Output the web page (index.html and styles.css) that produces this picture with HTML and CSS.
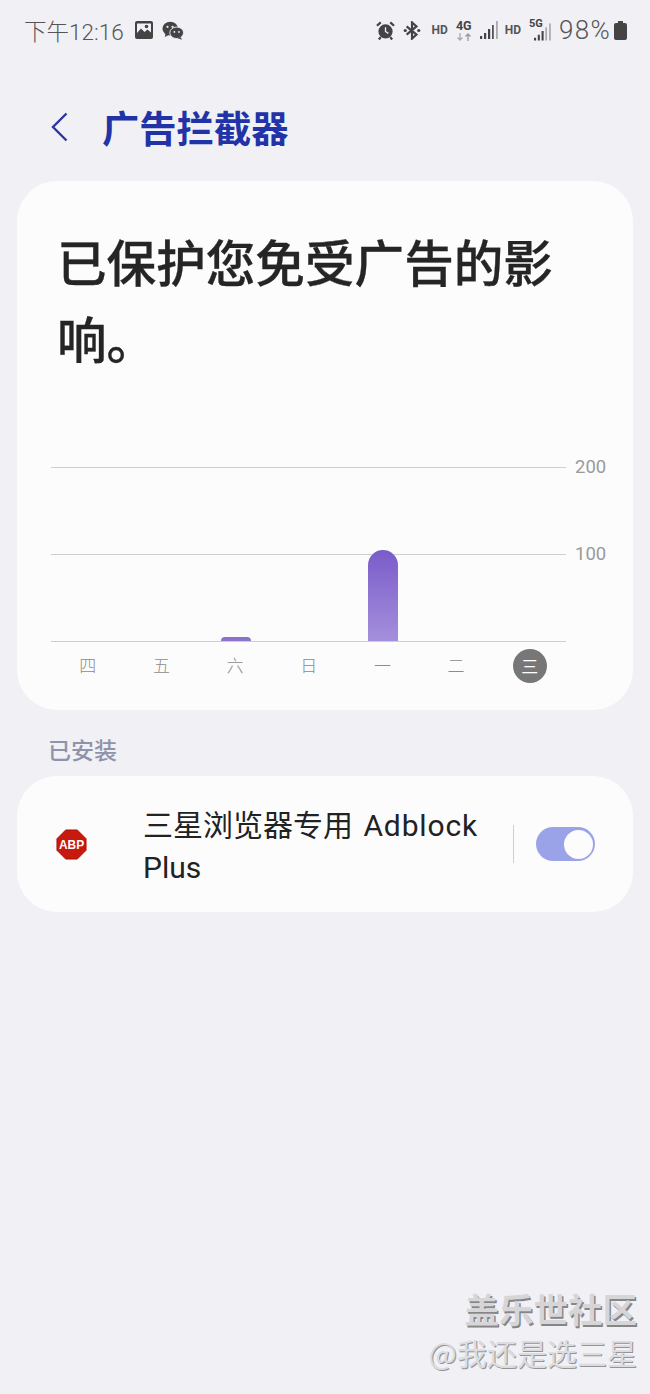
FILE: index.html
```html
<!DOCTYPE html>
<html lang="zh-CN">
<head>
<meta charset="utf-8">
<title>广告拦截器</title>
<link rel="stylesheet" href="styles.css">
</head>
<body>
<div class="screen">
  <div class="status">
    <div class="status-left">
      <span class="time">下午12:16</span>
      <svg class="ic-pic" viewBox="0 0 20 20"><path fill="#444" fill-rule="evenodd" d="M3 1h14a2 2 0 0 1 2 2v14a2 2 0 0 1-2 2H3a2 2 0 0 1-2-2V3a2 2 0 0 1 2-2zm0 2.500V13l4-4.500 3.500 3.500 3-2.500 3.500 3V3.500z"/><circle cx="12.500" cy="6.500" r="1.800" fill="#444"/></svg>
      <svg class="ic-wechat" viewBox="0 0 24 20"><ellipse cx="9" cy="8" rx="8.500" ry="7.500" fill="#444"/><path d="M4 13l-1 4 5-2.500z" fill="#444"/><ellipse cx="16" cy="12.500" rx="7.500" ry="6.300" fill="#444" stroke="#f0f0f5" stroke-width="1"/><path d="M20 17l2 3-5-1.500z" fill="#444"/><circle cx="6" cy="6" r="1.200" fill="#f0f0f5"/><circle cx="11.500" cy="6" r="1.200" fill="#f0f0f5"/><circle cx="13.500" cy="11.500" r="1" fill="#f0f0f5"/><circle cx="18.500" cy="11.500" r="1" fill="#f0f0f5"/></svg>
    </div>
    <div class="status-right">
      <svg class="ic-alarm" viewBox="0 0 20 20"><circle cx="10" cy="11" r="7.500" fill="#444"/><path d="M10 6.500V11l3 2" stroke="#f0f0f5" stroke-width="1.400" fill="none"/><path d="M1 5l4-3.500M19 5l-4-3.500M5 17l-2 2.500M15 17l2 2.500" stroke="#444" stroke-width="2.400"/></svg>
      <svg class="ic-bt" viewBox="0 0 20 20"><path d="M4 5.500l11 9-5 4.500V1l5 4.500-11 9" fill="none" stroke="#444" stroke-width="2.400"/><circle cx="2.500" cy="10" r="1.800" fill="#444"/><circle cx="17.500" cy="10" r="1.800" fill="#444"/></svg>
      <span class="hd hd-first">HD</span>
      <span class="net">
        <span class="net-label">4G</span>
        <svg class="ic-arrows" viewBox="0 0 16 8"><path d="M4 0v7M1.500 4.500L4 7l2.500-2.500" stroke="#aaa" stroke-width="1.300" fill="none"/><path d="M12 8V1M9.500 3.500L12 1l2.500 2.500" stroke="#999" stroke-width="1.300" fill="none"/></svg>
      </span>
      <svg class="ic-signal" viewBox="0 0 18 18"><path fill="#444" d="M0 15h2.200v3H0zM4 12h2.200v6H4zM8 8h2.200v10H8z"/><path fill="#555" d="M12 4h1.800v14H12z"/><path fill="#aaa" d="M16 0h1.800v18H16z"/></svg>
      <span class="hd hd-second">HD</span>
      <span class="net net-5g">
        <span class="net-label small">5G</span>
        <svg class="ic-signal5" viewBox="0 0 18 18"><path fill="#444" d="M0 15h2.200v3H0zM4 12h2.200v6H4zM8 8h2.200v10H8z"/><path fill="#aaa" d="M12 4h1.800v14H12zM16 0h1.800v18H16z"/></svg>
      </span>
      <span class="battery-text">98%</span>
      <svg class="ic-batt" viewBox="0 0 13 19"><path fill="#444" d="M4 0h5v2h2a2 2 0 0 1 2 2v13a2 2 0 0 1-2 2H2a2 2 0 0 1-2-2V4a2 2 0 0 1 2-2h2z"/></svg>
    </div>
  </div>

  <header class="appbar">
    <svg class="back" viewBox="0 0 17 30"><path d="M15.500 1.500L2 15l13.500 13.500" fill="none" stroke="#2a389f" stroke-width="2.400"/></svg>
    <h1 class="page-title">广告拦截器</h1>
  </header>

  <section class="card hero">
    <h2 class="headline">已保护您免受广告的影响。</h2>
    <div class="chart">
      <div class="plot">
        <div class="row"><span class="line"></span><span class="tick">200</span></div>
        <div class="row"><span class="line"></span><span class="tick">100</span></div>
        <div class="row"><span class="line"></span></div>
        <div class="bars">
          <div class="slot"></div>
          <div class="slot"></div>
          <div class="slot"><span class="bar bar-small"></span></div>
          <div class="slot"></div>
          <div class="slot"><span class="bar bar-big"></span></div>
          <div class="slot"></div>
          <div class="slot"></div>
        </div>
      </div>
      <div class="days">
        <span class="day">四</span>
        <span class="day">五</span>
        <span class="day">六</span>
        <span class="day">日</span>
        <span class="day">一</span>
        <span class="day">二</span>
        <span class="day today"><span class="today-mark">三</span></span>
      </div>
    </div>
  </section>

  <div class="section-label">已安装</div>

  <section class="card item">
    <svg class="abp" viewBox="0 0 32 32"><path fill="#c8190f" stroke="#a81208" stroke-width="1" d="M10 1h12l9 9v12l-9 9H10l-9-9V10z"/><text x="16" y="21" class="abp-text" text-anchor="middle" textLength="26" lengthAdjust="spacingAndGlyphs">ABP</text></svg>
    <div class="item-name">三星浏览器专用 <span class="latin">Adblock</span> Plus</div>
    <span class="divider"></span>
    <span class="switch"><span class="knob"></span></span>
  </section>

  <footer class="watermark">
    <div class="wm-main">盖乐世社区</div>
    <div class="wm-sub">@我还是选三星</div>
  </footer>
</div>
</body>
</html>
```

FILE: styles.css
```css
* { box-sizing: border-box; }
html, body { margin: 0; padding: 0; }
body {
  width: 650px;
  height: 1394px;
  overflow: hidden;
  background: #f0f0f5;
  font-family: Roboto, "Noto Sans CJK SC", sans-serif;
}
.screen {
  height: 1394px;
  display: flex;
  flex-direction: column;
  padding: 0 17px;
}
.status {
  height: 60px;
  margin: 0 -17px;
  padding: 0 23px 0 24px;
  display: flex;
  justify-content: space-between;
  align-items: center;
  color: #555;
}
.status-left, .status-right { display: flex; align-items: center; }
.time { font-size: 22.500px; font-weight: 300; color: #555; line-height: 28px; margin-top: 4px; }
.ic-pic { width: 20px; height: 20px; margin-left: 10px; }
.ic-wechat { width: 22px; height: 19px; margin-left: 8px; }
.ic-alarm { width: 19px; height: 19px; margin-right: 8px; }
.ic-bt { width: 18px; height: 19px; margin-right: 10px; }
.hd { font-size: 12px; font-weight: 700; color: #555; line-height: 20px; }
.hd-first { margin-right: 8px; }
.hd-second { margin-right: 8px; }
.net { display: flex; flex-direction: column; align-items: center; width: 16px; margin-right: 8px; }
.net-label { font-size: 12.500px; font-weight: 700; color: #444; line-height: 12px; }
.ic-arrows { width: 16px; height: 8px; margin-top: 1px; }
.ic-signal { width: 18px; height: 18px; margin-right: 7px; }
.net-5g { position: relative; width: 22px; height: 22px; margin-right: 8px; }
.net-label.small { position: absolute; left: 0; top: -1px; font-size: 11px; }
.ic-signal5 { position: absolute; left: 5px; top: 4px; width: 17px; height: 18px; }
.battery-text { font-size: 26px; letter-spacing: 1.300px; font-weight: 300; color: #555; line-height: 28px; margin-right: 3px; }
.ic-batt { width: 13px; height: 19px; }

.appbar {
  height: 121px;
  margin: 0 -17px;
  padding: 13px 0 0 51px;
  display: flex;
  align-items: center;
}
.back { width: 17px; height: 30px; flex: none; }
.page-title {
  margin: 0 0 0 34px;
  font-size: 37.300px;
  font-weight: 700;
  line-height: 48px;
  color: #2233a8;
  font-family: "Noto Sans CJK SC", sans-serif;
}
.card { background: #fcfcfd; border-radius: 40px; }
.hero { height: 529px; padding: 41px 34px 0; display: flex; flex-direction: column; }
.headline {
  margin: 0;
  padding: 0 25px 0 6px;
  font-size: 49.600px;
  line-height: 77px;
  font-weight: 500;
  color: #252525;
  -webkit-text-stroke: 0.300px #252525;
  font-family: "Noto Sans CJK SC", sans-serif;
}
.chart { margin-top: 91px; }
.plot { position: relative; height: 175px; width: 560px; }
.row { height: 87px; display: flex; align-items: flex-start; }
.row:nth-child(3) { height: 1px; }
.line { width: 515px; height: 1px; background: #cfcfd1; flex: none; }
.tick {
  font-size: 18.500px;
  line-height: 20px;
  color: #9a9a9a;
  margin-left: 9px;
  margin-top: -10px;
}
.bars {
  position: absolute;
  left: 0;
  bottom: 1px;
  width: 517px;
  height: 100px;
  display: grid;
  grid-template-columns: repeat(7, 1fr);
  align-items: end;
  justify-items: center;
}
.slot { display: flex; align-items: flex-end; height: 100%; }
.bar { display: block; width: 30px; }
.bar-small { height: 4px; background: #8a73c8; border-radius: 4px 4px 0 0; }
.bar-big {
  height: 91px;
  background: linear-gradient(#7a5cc9, #a48fdc);
  border-radius: 15px 15px 0 0;
}
.days {
  width: 515.500px;
  margin-top: 7px;
  display: grid;
  grid-template-columns: repeat(7, 1fr);
  justify-items: center;
  align-items: center;
  height: 34px;
}
.day {
  font-size: 17px;
  line-height: 24px;
  padding-bottom: 2px;
  color: #8c8c8c;
  font-weight: 300;
  font-family: "Noto Sans CJK SC", sans-serif;
}
.today { display: flex; padding-bottom: 0; }
.today-mark {
  width: 34px;
  height: 34px;
  border-radius: 50%;
  background: #777;
  color: #fff;
  font-weight: 400;
  display: flex;
  align-items: center;
  justify-content: center;
}
.section-label {
  margin: 23px 0 0 31px;
  height: 43px;
  font-size: 23px;
  line-height: 32px;
  font-weight: 500;
  color: #8f92ab;
  font-family: "Noto Sans CJK SC", sans-serif;
}
.item {
  height: 136px;
  display: flex;
  align-items: center;
  padding: 0 38px 0 39px;
}
.abp { width: 31px; height: 31px; flex: none; }
.abp-text { font-family: "Liberation Sans", sans-serif; font-size: 14px; font-weight: 700; fill: #fff; }
.item-name {
  width: 357px;
  margin-left: 56px;
  padding-top: 6px;
  font-size: 30px;
  line-height: 42px;
  color: #222;
  font-weight: 400;
}
.latin { letter-spacing: 0.850px; margin-left: 3px; }
.divider { width: 1px; height: 38px; background: #cfcfd3; margin-left: 13px; flex: none; }
.switch {
  width: 59px;
  height: 34px;
  margin-left: auto;
  border-radius: 17px;
  background: #9aa3e8;
  display: flex;
  align-items: center;
  justify-content: flex-end;
  padding-right: 2px;
}
.knob { width: 29px; height: 29px; border-radius: 50%; background: #fcfcfd; }
.watermark {
  margin-top: auto;
  margin-right: -4px;
  margin-bottom: 22px;
  text-align: right;
  font-family: "Noto Sans CJK SC", sans-serif;
}
.wm-main {
  font-size: 34.500px;
  line-height: 45px;
  margin-bottom: 1px;
  font-weight: 700;
  color: #d6d6d9;
  text-shadow: 1.500px 1.500px 0 #868689;
}
.wm-sub {
  font-size: 30px;
  line-height: 40px;
  color: #dcdcdf;
  text-shadow: 1px 1px 0 #949497;
  font-weight: 400;
}
```
